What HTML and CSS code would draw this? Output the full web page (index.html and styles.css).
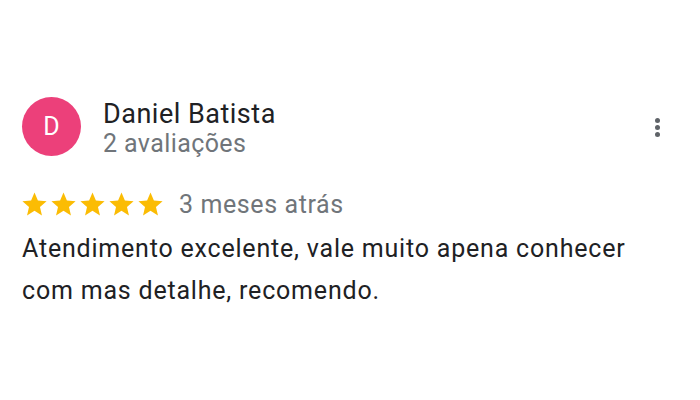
FILE: index.html
```html
<!DOCTYPE html>
<html lang="pt-BR">
<head>
    <meta charset="UTF-8">
    <meta name="viewport" content="width=device-width, initial-scale=1.0">
    <title>Avaliação</title>
    <link rel="stylesheet" href="styles.css">
</head>
<body>
    <div class="review">
        <div class="header">
            <div class="avatar">D</div>
            <div class="author">
                <div class="name">Daniel Batista</div>
                <div class="count">2 avaliações</div>
            </div>
            <div class="menu">
                <span class="dot"></span>
                <span class="dot"></span>
                <span class="dot"></span>
            </div>
        </div>
        <div class="rating">
            <div class="stars">
                <svg viewBox="0 0 24 24"><path d="M12 17.27L18.18 21l-1.64-7.03L22 9.24l-7.19-.61L12 2 9.19 8.63 2 9.24l5.46 4.73L5.82 21z"/></svg>
                <svg viewBox="0 0 24 24"><path d="M12 17.27L18.18 21l-1.64-7.03L22 9.24l-7.19-.61L12 2 9.19 8.63 2 9.24l5.46 4.73L5.82 21z"/></svg>
                <svg viewBox="0 0 24 24"><path d="M12 17.27L18.18 21l-1.64-7.03L22 9.24l-7.19-.61L12 2 9.19 8.63 2 9.24l5.46 4.73L5.82 21z"/></svg>
                <svg viewBox="0 0 24 24"><path d="M12 17.27L18.18 21l-1.64-7.03L22 9.24l-7.19-.61L12 2 9.19 8.63 2 9.24l5.46 4.73L5.82 21z"/></svg>
                <svg viewBox="0 0 24 24"><path d="M12 17.27L18.18 21l-1.64-7.03L22 9.24l-7.19-.61L12 2 9.19 8.63 2 9.24l5.46 4.73L5.82 21z"/></svg>
            </div>
            <span class="date">3 meses atrás</span>
        </div>
        <p class="text">Atendimento excelente, vale muito apena conhecer com mas detalhe, recomendo.</p>
    </div>
</body>
</html>
```

FILE: styles.css
```css
body {
    font-family: 'Roboto', sans-serif;
    margin: 0;
    background-color: white;
}

.review {
    padding: 97px 0 0 22px;
    width: 638px;
}

.header {
    display: flex;
    align-items: flex-start;
}

.avatar {
    width: 59px;
    height: 59px;
    border-radius: 50%;
    background-color: #ec407a;
    color: white;
    font-size: 25px;
    display: flex;
    align-items: center;
    justify-content: center;
}

.author {
    margin: 2px 0 -3px 22px;
    flex: 1;
}

.name {
    font-size: 27px;
    letter-spacing: 0.5px;
    color: #202124;
    line-height: 30px;
}

.count {
    font-size: 25px;
    letter-spacing: 0.4px;
    color: #70757a;
    line-height: 30px;
}

.menu {
    display: flex;
    flex-direction: column;
    gap: 2px;
    margin-top: 21px;
}

.dot {
    width: 5px;
    height: 5px;
    border-radius: 50%;
    background-color: #5f6368;
}

.rating {
    display: flex;
    align-items: center;
    margin-top: 34px;
}

.stars {
    display: flex;
    margin-left: -2px;
}

.stars svg {
    width: 29px;
    height: 29px;
    fill: #fbbc04;
}

.date {
    margin-left: 14px;
    font-size: 25px;
    letter-spacing: 0.6px;
    color: #70757a;
}

.text {
    margin: 9px 0 0;
    font-size: 25px;
    letter-spacing: 0.8px;
    line-height: 42px;
    color: #202124;
}
```
